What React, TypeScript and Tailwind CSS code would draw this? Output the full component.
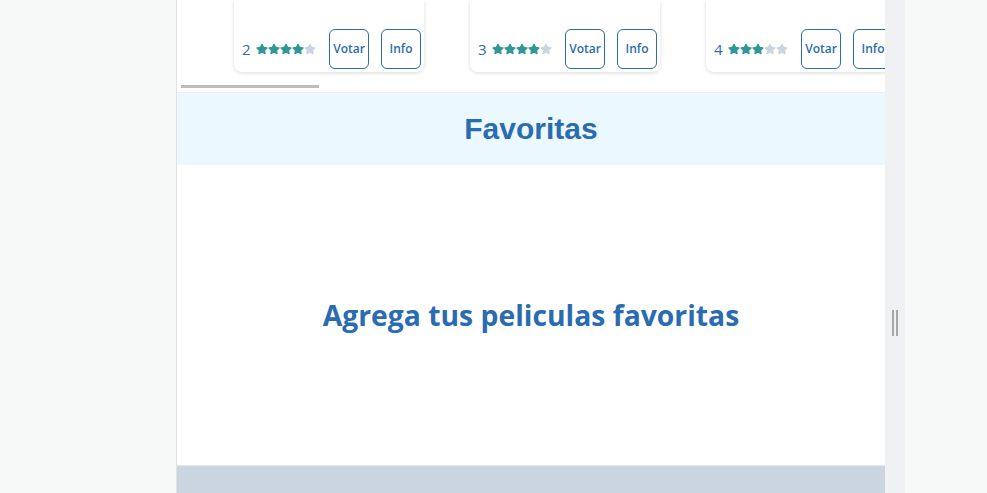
import React from "react";

const movies = [
  { id: 2, rating: 4 },
  { id: 3, rating: 4 },
  { id: 4, rating: 3 },
];

function Star({ filled }: { filled: boolean }) {
  return (
    <svg viewBox="0 0 576 512" className={filled ? "w-3 h-3 fill-[#319795]" : "w-3 h-3 fill-[#cbd5e0]"}>
      <path d="M259.3 17.8L194 150.2 47.9 171.5c-26.2 3.8-36.7 36.1-17.7 54.6l105.7 103-25 145.5c-4.5 26.3 23.2 46 46.4 33.7L288 439.6l130.7 68.7c23.2 12.2 50.9-7.4 46.4-33.7l-25-145.5 105.7-103c19-18.5 8.5-50.8-17.7-54.6L382 150.2 316.7 17.8c-11.7-23.6-45.6-23.9-57.4 0z" />
    </svg>
  );
}

function MovieCard({ id, rating }: { id: number; rating: number }) {
  return (
    <div className="w-[190px] h-[72px] shrink-0 bg-white rounded-b-lg shadow-[0_1px_4px_rgba(0,0,0,0.14)] flex items-end pl-2 pr-[3px] pb-[3px]">
      <div className="flex items-center h-10">
        <span className="text-[15px] text-[#2b6cb0] mr-[5px]">{id}</span>
        <div className="flex">
          {[0, 1, 2, 3, 4].map((i) => (
            <Star key={i} filled={i < rating} />
          ))}
        </div>
      </div>
      <div className="ml-auto flex gap-3">
        <button className="w-10 h-10 rounded-md border border-[#2b6cb0] text-[#2b6cb0] text-xs font-semibold">
          Votar
        </button>
        <button className="w-10 h-10 rounded-md border border-[#2b6cb0] text-[#2b6cb0] text-xs font-semibold">
          Info
        </button>
      </div>
    </div>
  );
}

export default function App() {
  return (
    <div className="h-[493px] w-full flex bg-[#f7f8f8] font-['Open_Sans',sans-serif] overflow-hidden">
      <div className="w-[177px] shrink-0 border-r border-[#e2e2e2]" />

      {/* Main panel */}
      <div className="w-[708px] shrink-0 bg-white flex flex-col overflow-hidden">
        <div className="h-[92px] shrink-0 overflow-hidden">
          <div className="flex gap-[46px] pl-[57px] h-[72px]">
            {movies.map((m) => (
              <MovieCard key={m.id} {...m} />
            ))}
          </div>
          <div className="h-[20px] pt-[13px] pl-1">
            <div className="w-[138px] h-[3px] bg-[#bcbcbc]" />
          </div>
        </div>

        <div className="h-[73px] shrink-0 bg-[#ebf8ff] border-t border-[#edf0f2] flex items-center justify-center pb-[2px]">
          <h2 className="text-[30px] font-bold text-[#2b6cb0] font-['Liberation_Sans',Arial,sans-serif]">Favoritas</h2>
        </div>

        <div className="h-[300px] shrink-0 flex items-center justify-center">
          <p className="text-[28.3px] font-bold text-[#2b6cb0]">Agrega tus peliculas favoritas</p>
        </div>

        <div className="flex-1 bg-[#cbd5e0] border-t border-[#e2e8f0]" />
      </div>

      {/* Resize gutter */}
      <div className="w-[20px] shrink-0 bg-[#f0f1f3] flex items-center justify-center pt-[153px]">
        <div className="flex gap-[2px]">
          <div className="w-[2px] h-[26px] bg-[#a6a6a6]" />
          <div className="w-[2px] h-[26px] bg-[#a6a6a6]" />
        </div>
      </div>

      <div className="flex-1" />
    </div>
  );
}
